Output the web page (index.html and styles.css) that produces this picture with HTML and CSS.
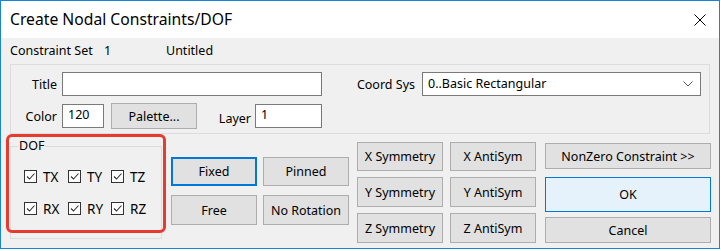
FILE: index.html
```html
<!DOCTYPE html>
<html lang="en">
<head>
    <meta charset="UTF-8">
    <title>Create Nodal Constraints/DOF</title>
    <link rel="stylesheet" href="styles.css">
</head>
<body>
    <div class="window">
        <!-- Title bar -->
        <div class="titlebar">
            <span class="title">Create Nodal Constraints/DOF</span>
            <svg class="close" width="12" height="12" viewBox="0 0 12 12">
                <path d="M0.5 0.5 L11.5 11.5 M11.5 0.5 L0.5 11.5" stroke="#000" stroke-width="1" fill="none"/>
            </svg>
        </div>

        <!-- Constraint set info -->
        <div class="set-row">
            <span class="set-label">Constraint Set</span>
            <span class="set-id">1</span>
            <span>Untitled</span>
        </div>

        <!-- Title / color / layer / coord sys -->
        <div class="group">
            <div class="row">
                <label class="lbl">Title</label>
                <div class="field title-field"></div>
                <label class="lbl coord-lbl">Coord Sys</label>
                <div class="field select">
                    <span>0..Basic Rectangular</span>
                    <svg width="10" height="6" viewBox="0 0 10 6">
                        <path d="M0.5 0.5 L5 5 L9.5 0.5" stroke="#555" stroke-width="1" fill="none"/>
                    </svg>
                </div>
            </div>
            <div class="row row2">
                <label class="lbl">Color</label>
                <div class="field color-field">120</div>
                <button class="btn palette">Palette...</button>
                <label class="lbl layer-lbl">Layer</label>
                <div class="field layer-field">1</div>
            </div>
        </div>

        <!-- DOF and action buttons -->
        <div class="bottom">
            <div class="dof">
                <span class="legend">DOF</span>
                <div class="checks">
                    <label class="check"><span class="box"><svg width="11" height="11" viewBox="0 0 11 11"><path d="M2 5.5 L4.5 8 L9.5 2.5" stroke="#333" stroke-width="1.1" fill="none"/></svg></span>TX</label>
                    <label class="check"><span class="box"><svg width="11" height="11" viewBox="0 0 11 11"><path d="M2 5.5 L4.5 8 L9.5 2.5" stroke="#333" stroke-width="1.1" fill="none"/></svg></span>TY</label>
                    <label class="check"><span class="box"><svg width="11" height="11" viewBox="0 0 11 11"><path d="M2 5.5 L4.5 8 L9.5 2.5" stroke="#333" stroke-width="1.1" fill="none"/></svg></span>TZ</label>
                    <label class="check"><span class="box"><svg width="11" height="11" viewBox="0 0 11 11"><path d="M2 5.5 L4.5 8 L9.5 2.5" stroke="#333" stroke-width="1.1" fill="none"/></svg></span>RX</label>
                    <label class="check"><span class="box"><svg width="11" height="11" viewBox="0 0 11 11"><path d="M2 5.5 L4.5 8 L9.5 2.5" stroke="#333" stroke-width="1.1" fill="none"/></svg></span>RY</label>
                    <label class="check"><span class="box"><svg width="11" height="11" viewBox="0 0 11 11"><path d="M2 5.5 L4.5 8 L9.5 2.5" stroke="#333" stroke-width="1.1" fill="none"/></svg></span>RZ</label>
                </div>
            </div>

            <div class="presets">
                <button class="btn focused">Fixed</button>
                <button class="btn">Pinned</button>
                <button class="btn">Free</button>
                <button class="btn">No Rotation</button>
            </div>

            <div class="symmetry">
                <button class="btn">X Symmetry</button>
                <button class="btn">X AntiSym</button>
                <button class="btn">Y Symmetry</button>
                <button class="btn">Y AntiSym</button>
                <button class="btn">Z Symmetry</button>
                <button class="btn">Z AntiSym</button>
            </div>

            <div class="actions">
                <button class="btn nonzero">NonZero Constraint &gt;&gt;</button>
                <button class="btn ok">OK</button>
                <button class="btn cancel">Cancel</button>
            </div>

            <!-- Red highlight drawn over the DOF box -->
            <div class="highlight"></div>
        </div>
    </div>
</body>
</html>
```

FILE: styles.css
```css
/* General styling */
body {
    margin: 0;
    background-color: #fff;
    font-family: 'Noto Sans', sans-serif;
    font-size: 12.5px;
    color: #000;
}

.window {
    width: 720px;
    height: 249px;
    box-sizing: border-box;
    border: 1px solid #1883d7;
    background-color: #f0f0f0;
}

/* Title bar */
.titlebar {
    height: 37px;
    background-color: #fff;
    display: flex;
    align-items: center;
    justify-content: space-between;
    padding: 0 13px 0 9px;
}

.title {
    font-size: 15.7px;
    margin-top: -1px;
}

.close {
    margin-top: 1px;
}

/* Constraint set line */
.set-row {
    height: 26px;
    line-height: 26px;
    padding-left: 9px;
    display: flex;
}

.set-label {
    width: 94px;
}

.set-id {
    width: 62px;
}

/* Upper group box */
.group {
    margin-left: 9px;
    width: 700px;
    height: 70px;
    box-sizing: border-box;
    border: 1px solid #dcdcdc;
    padding-top: 7px;
}

.row {
    display: flex;
    height: 24px;
    align-items: center;
}

.row2 {
    margin-top: 8px;
}

.lbl {
    width: 46px;
    text-align: right;
    margin-right: 5px;
}

.coord-lbl {
    width: 93px;
    padding-right: 2px;
}

.layer-lbl {
    width: 54px;
    margin-right: 4px;
    padding-top: 4px;
}

.field {
    height: 24px;
    box-sizing: border-box;
    border: 1px solid #7a7a7a;
    background-color: #fff;
    padding-left: 5px;
    line-height: 20px;
}

.title-field {
    width: 260px;
}

.select {
    width: 279px;
    display: flex;
    justify-content: space-between;
    align-items: center;
    padding-right: 7px;
}

.color-field {
    width: 42px;
}

.layer-field {
    width: 67px;
}

/* Buttons */
.btn {
    font-family: 'Noto Sans', sans-serif;
    font-size: 12.5px;
    color: #000;
    background-color: #e1e1e1;
    border: 1px solid #adadad;
    padding: 0;
    margin: 0;
    box-sizing: border-box;
}

.palette {
    width: 86px;
    height: 26px;
    margin-left: 7px;
}

.focused {
    border: 2px solid #0078d7;
}

/* Bottom area */
.bottom {
    position: relative;
    display: flex;
    align-items: flex-start;
}

.dof {
    position: relative;
    margin: 12px 0 0 9px;
    width: 152px;
    height: 93px;
    box-sizing: border-box;
    border: 1px solid #dcdcdc;
}

.legend {
    position: absolute;
    top: -10px;
    left: 7px;
    padding: 0 1px;
    background-color: #f0f0f0;
}

.checks {
    display: grid;
    grid-template-columns: 44px 43px 43px;
    grid-auto-rows: 32px;
    margin: 23px 0 0 13px;
}

.check {
    display: flex;
    align-items: center;
    height: 13px;
    font-size: 13.5px;
}

.box {
    width: 13px;
    height: 13px;
    box-sizing: border-box;
    border: 1px solid #333;
    background-color: #fff;
    margin-right: 6px;
    display: flex;
}

.presets {
    display: grid;
    grid-template-columns: 86px 86px;
    grid-template-rows: 29px 30px;
    column-gap: 6px;
    row-gap: 9px;
    margin: 23px 0 0 9px;
}

.symmetry {
    display: grid;
    grid-template-columns: 86px 86px;
    grid-template-rows: 29px 30px 30px;
    column-gap: 7px;
    row-gap: 6px;
    margin: 8px 0 0 8px;
}

.actions {
    display: flex;
    flex-direction: column;
    width: 166px;
    margin: 9px 0 0 9px;
}

.nonzero {
    height: 26px;
}

.ok {
    height: 35px;
    margin-top: 8px;
    background-color: #e5f1fb;
    border-color: #0078d7;
}

.cancel {
    height: 26px;
    margin-top: 5px;
}

/* Red annotation box */
.highlight {
    position: absolute;
    left: 5px;
    top: 0;
    width: 160px;
    height: 99px;
    box-sizing: border-box;
    border: 3px solid #e53b30;
    border-radius: 6px;
}
```
